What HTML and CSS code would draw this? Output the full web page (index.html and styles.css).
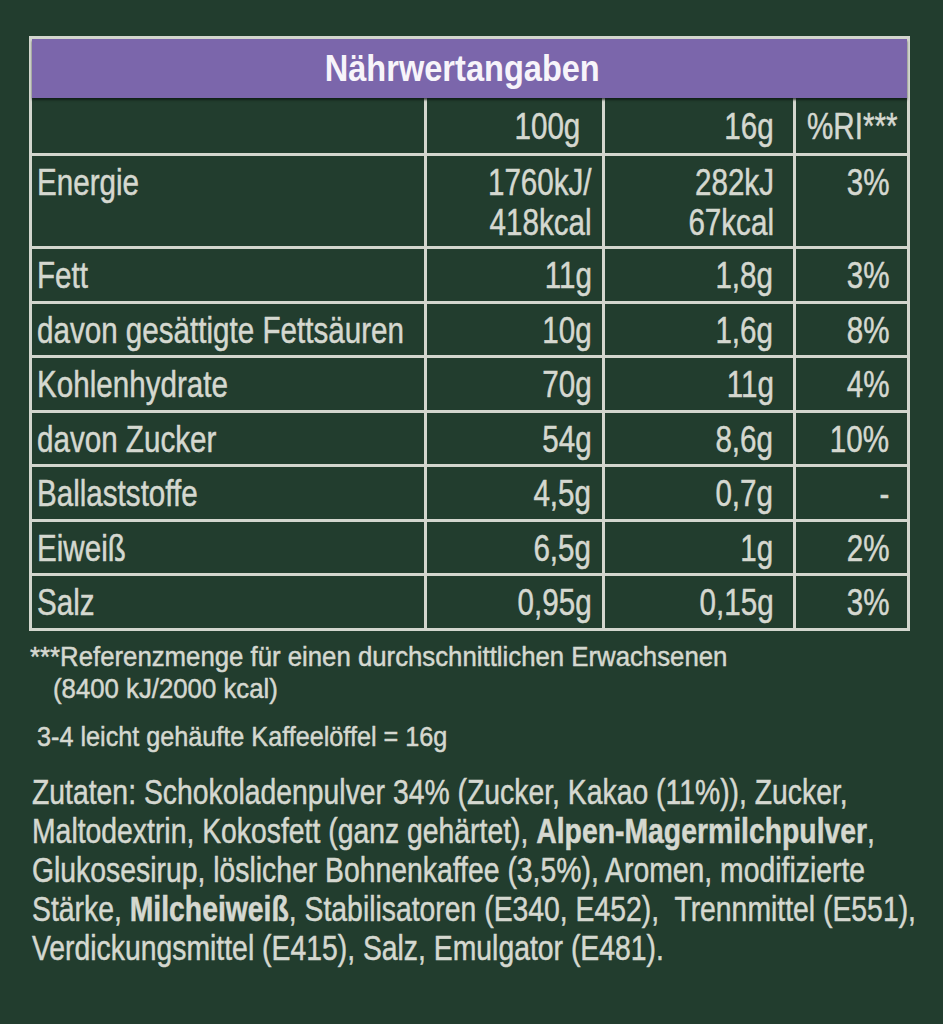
FILE: index.html
```html
<!DOCTYPE html>
<html lang="de">
<head>
<meta charset="utf-8">
<title>Nährwertangaben</title>
<link rel="stylesheet" href="styles.css">
</head>
<body>
<main class="page">
  <section class="panel">
    <h1 class="title"><span class="sq">Nährwertangaben</span></h1>
    <table class="nutri">
      <colgroup>
        <col class="c1"><col class="c2"><col class="c3"><col class="c4">
      </colgroup>
      <thead>
        <tr class="head-row">
          <th></th>
          <th class="num n2"><span class="sq">100g</span></th>
          <th class="num n3"><span class="sq">16g</span></th>
          <th class="ri"><span class="sq">%RI***</span></th>
        </tr>
      </thead>
      <tbody>
        <tr class="tall">
          <td><span class="sq">Energie</span></td>
          <td class="num n2"><span class="sq">1760kJ/<br>418kcal</span></td>
          <td class="num n3"><span class="sq">282kJ<br>67kcal</span></td>
          <td class="num n4"><span class="sq">3%</span></td>
        </tr>
        <tr><td><span class="sq">Fett</span></td><td class="num n2"><span class="sq">11g</span></td><td class="num n3"><span class="sq">1,8g</span></td><td class="num n4"><span class="sq">3%</span></td></tr>
        <tr><td><span class="sq">davon gesättigte Fettsäuren</span></td><td class="num n2"><span class="sq">10g</span></td><td class="num n3"><span class="sq">1,6g</span></td><td class="num n4"><span class="sq">8%</span></td></tr>
        <tr><td><span class="sq">Kohlenhydrate</span></td><td class="num n2"><span class="sq">70g</span></td><td class="num n3"><span class="sq">11g</span></td><td class="num n4"><span class="sq">4%</span></td></tr>
        <tr><td><span class="sq">davon Zucker</span></td><td class="num n2"><span class="sq">54g</span></td><td class="num n3"><span class="sq">8,6g</span></td><td class="num n4"><span class="sq">10%</span></td></tr>
        <tr><td><span class="sq">Ballaststoffe</span></td><td class="num n2"><span class="sq">4,5g</span></td><td class="num n3"><span class="sq">0,7g</span></td><td class="num n4"><span class="sq">-</span></td></tr>
        <tr><td><span class="sq">Eiweiß</span></td><td class="num n2"><span class="sq">6,5g</span></td><td class="num n3"><span class="sq">1g</span></td><td class="num n4"><span class="sq">2%</span></td></tr>
        <tr><td><span class="sq">Salz</span></td><td class="num n2"><span class="sq">0,95g</span></td><td class="num n3"><span class="sq">0,15g</span></td><td class="num n4"><span class="sq">3%</span></td></tr>
      </tbody>
    </table>
  </section>

  <p class="note">***Referenzmenge für einen durchschnittlichen Erwachsenen<br><span class="indent">(8400 kJ/2000 kcal)</span></p>
  <p class="serving">3-4 leicht gehäufte Kaffeelöffel = 16g</p>
  <p class="ingredients">Zutaten: Schokoladenpulver 34% (Zucker, Kakao (11%)), Zucker,<br>Maltodextrin, Kokosfett (ganz gehärtet), <b>Alpen-Magermilchpulver</b>,<br>Glukosesirup, löslicher Bohnenkaffee (3,5%), Aromen, modifizierte<br>Stärke, <b>Milcheiweiß</b>, Stabilisatoren (E340, E452),&nbsp; Trennmittel (E551),<br>Verdickungsmittel (E415), Salz, Emulgator (E481).</p>
</main>
</body>
</html>
```

FILE: styles.css
```css
html, body {
  margin: 0;
  padding: 0;
  background: #223d2e;
}

body {
  width: 943px;
  height: 1024px;
  overflow: hidden;
  font-family: "Liberation Sans", "DejaVu Sans", sans-serif;
  color: #d5d8d0;
  -webkit-text-stroke: 0.5px currentColor;
}

.page {
  padding: 36px 0 0 29px;
}

.sq {
  display: inline-block;
  transform: scaleX(0.8);
  transform-origin: left center;
}

.panel {
  width: 875px;
  border: 3px solid #d3d6ce;
}

.title {
  margin: 0;
  height: 59px;
  line-height: 59px;
  background: #7b66ab;
  color: #f7f4fa;
  font-size: 37px;
  font-weight: bold;
  text-align: center;
  padding-right: 14px;
  box-shadow: 0 2px 2px rgba(10, 20, 14, 0.7);
  position: relative;
  z-index: 1;
  -webkit-text-stroke: 0;
}

.title .sq {
  transform: scaleX(0.88);
  transform-origin: center center;
}

.nutri {
  width: 875px;
  table-layout: fixed;
  border-collapse: collapse;
  border-style: hidden;
}

.c1 { width: 393px; }
.c2 { width: 178px; }
.c3 { width: 191px; }
.c4 { width: 113px; }

.nutri th,
.nutri td {
  border: 3px solid #d3d6ce;
  font-size: 37px;
  line-height: 40px;
  font-weight: normal;
  padding: 7px 4px 4.5px 5px;
  text-align: left;
  vertical-align: top;
  white-space: nowrap;
  overflow: visible;
}

.nutri .head-row th {
  padding-top: 9px;
  padding-bottom: 6px;
}

.nutri .tall td {
  padding-bottom: 3px;
}

.nutri .num { text-align: right; }
.nutri .num .sq { transform-origin: right center; }
.nutri .n2 { padding-right: 10px; }
.nutri .n3 { padding-right: 19px; }
.nutri .n4 { padding-right: 18px; }
.nutri .head-row .n2 { padding-right: 21px; }
.nutri .head-row .ri { padding-left: 11px; padding-right: 0; }

.note,
.serving,
.ingredients {
  white-space: nowrap;
  transform-origin: left top;
}

.note {
  margin: 10px 0 0 1px;
  font-size: 28px;
  line-height: 32px;
  transform: scaleX(0.92);
}

.indent {
  padding-left: 25px;
}

.serving {
  margin: 16px 0 0 8px;
  font-size: 28px;
  line-height: 32px;
  transform: scaleX(0.9);
}

.ingredients {
  margin: 19px 0 0 3px;
  font-size: 35px;
  line-height: 39px;
  transform: scaleX(0.81);
}

.ingredients b {
  font-weight: bold;
}
```
